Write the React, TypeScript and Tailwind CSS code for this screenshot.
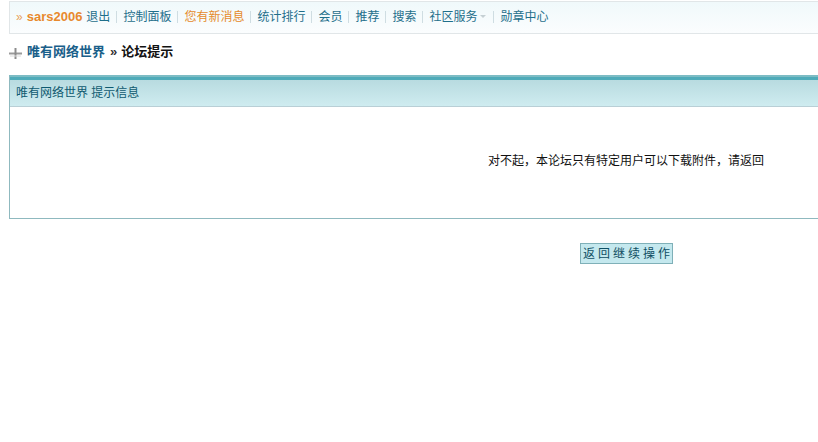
import React from 'react';

const cjk = "font-['Liberation_Sans','Noto_Sans_CJK_SC',sans-serif]";

function Sep() {
  return <span className="mx-[6px] h-[12px] w-px shrink-0 bg-[#cfdde2]" />;
}

function NavLink({ children, orange }: { children: React.ReactNode; orange?: boolean }) {
  return <a className={orange ? 'text-[#e58a2a]' : 'text-[#1f6f8b]'}>{children}</a>;
}

export default function App() {
  return (
    <div className={`${cjk} h-[442px] w-[818px] overflow-hidden bg-white pl-[9px] pt-px text-[12px] leading-[16px]`}>
      {/* top nav */}
      <div className="flex h-[33px] w-[830px] items-center border border-[#e1e6e8] bg-gradient-to-b from-[#f0f9fb] to-[#fbfdfe] pb-[2px] pl-[6px]">
        <span className="mr-[4px] text-[#e8a25c]">»</span>
        <b className="mr-[4px] text-[13px] text-[#e8892e]">sars2006</b>
        <NavLink>退出</NavLink>
        <Sep />
        <NavLink>控制面板</NavLink>
        <Sep />
        <NavLink orange>您有新消息</NavLink>
        <Sep />
        <NavLink>统计排行</NavLink>
        <Sep />
        <NavLink>会员</NavLink>
        <Sep />
        <NavLink>推荐</NavLink>
        <Sep />
        <NavLink>搜索</NavLink>
        <Sep />
        <NavLink>社区服务</NavLink>
        <span className="ml-[3px] mr-px h-0 w-0 border-x-[3px] border-t-[3px] border-x-transparent border-t-[#c5d0d4]" />
        <Sep />
        <NavLink>勋章中心</NavLink>
      </div>

      {/* breadcrumb */}
      <div className="mt-[10px] flex h-[16px] items-center text-[13px] font-bold">
        <svg width="14" height="14" viewBox="0 0 14 14" className="mr-[4px] mt-[2px] shrink-0">
          <path d="M0 7.5h13" stroke="#9a9a9a" strokeWidth="2" />
          <path d="M6.5 2v11" stroke="#8c8c8c" strokeWidth="2" />
          <path d="M1 10h11" stroke="#dcdcdc" strokeWidth="1" />
        </svg>
        <a className="text-[#1a5f8a]">唯有网络世界</a>
        <span className="ml-[5px] mr-[4px] text-[#333]">»</span>
        <span className="text-[#111]">论坛提示</span>
      </div>

      {/* message box */}
      <div className="mt-[15px] h-[144px] w-[830px] border border-t-2 border-[#8fb9bf] border-t-[#7dbcc4]">
        <div className="h-[30px] border-b border-[#b9cfd6] border-t-[3px] border-t-[#4fabb9] bg-gradient-to-b from-[#b8dbe0] to-[#cfecf0]">
          <div className="pl-[6px] pt-[5px] text-[#0f5a70]">唯有网络世界 提示信息</div>
        </div>
        <div className="pl-[478px] pt-[46px] text-[#111]">对不起，本论坛只有特定用户可以下载附件，请返回</div>
      </div>

      {/* back button */}
      <div className="mt-[24px] pl-[571px]">
        <button className="flex h-[21px] w-[93px] items-center justify-center whitespace-nowrap border border-[#7fb0b8] bg-[#c4e8ee] pl-[3px] text-[12px] tracking-[3px] text-[#0f4f63]">
          返回继续操作
        </button>
      </div>
    </div>
  );
}
